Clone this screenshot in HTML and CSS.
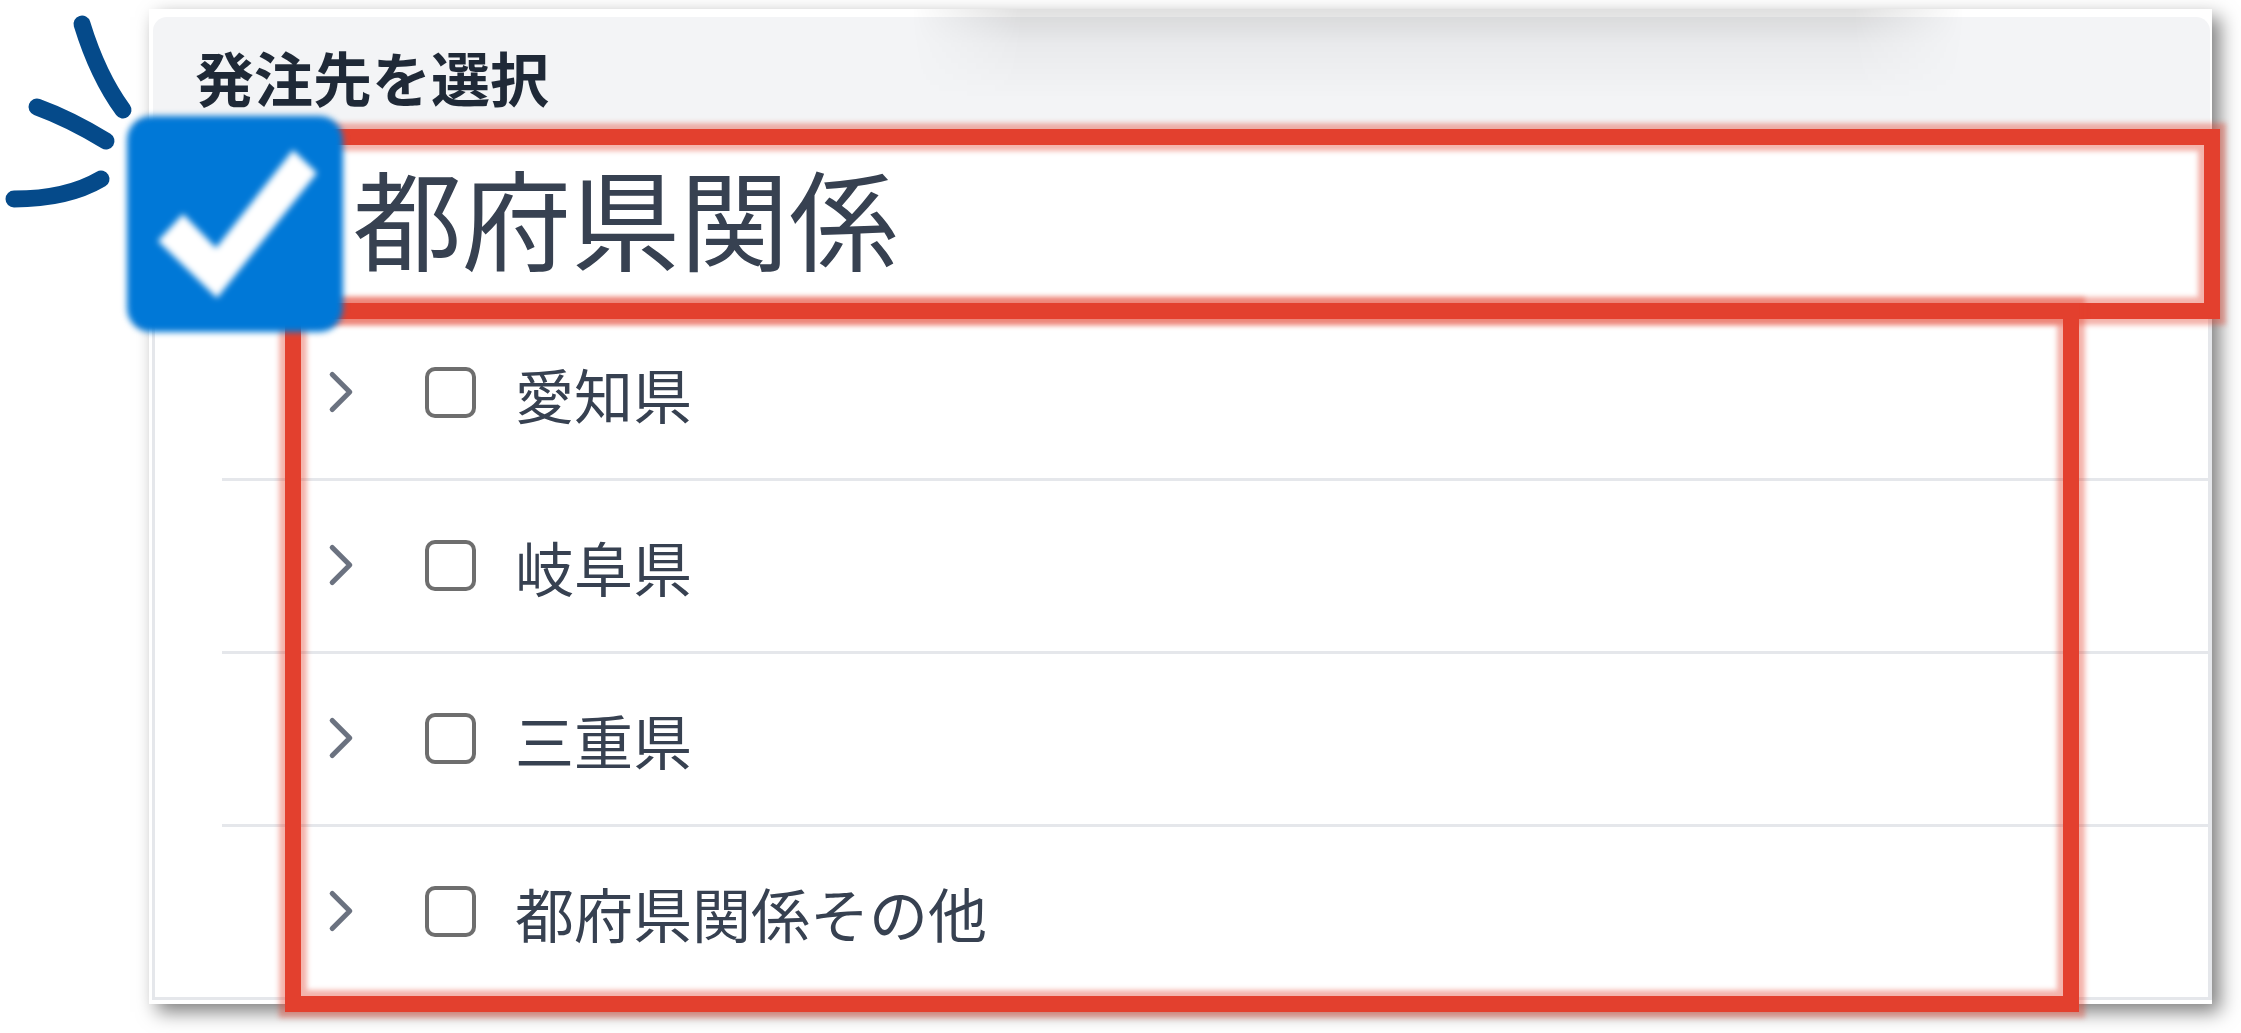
FILE: index.html
```html
<!DOCTYPE html>
<html lang="ja">
<head>
    <meta charset="UTF-8">
    <meta name="viewport" content="width=device-width, initial-scale=1.0">
    <title>発注先を選択</title>
    <link rel="stylesheet" href="styles.css">
</head>
<body>
    <main class="panel">
        <header class="panel-header">
            <h1>発注先を選択</h1>
        </header>

        <!-- Parent category -->
        <div class="group">
            <div class="highlight group-highlight"></div>
            <span class="group-check">
                <input type="checkbox" id="group" checked>
                <svg viewBox="0 0 216 216" aria-hidden="true">
                    <path d="M31 125 L56 98 L89 132 L166 34 L190 57 L90 182 Z" fill="#fff"/>
                </svg>
            </span>
            <label for="group">都府県関係</label>
            <svg class="rays" viewBox="0 0 140 210" aria-hidden="true">
                <path d="M82 24 Q98 76 123 110"/>
                <path d="M37 107 Q70 119 106 141"/>
                <path d="M14 199 Q67 199 101 179"/>
            </svg>
        </div>

        <!-- Prefectures -->
        <div class="tree">
            <div class="highlight tree-highlight"></div>
            <ul>
                <li>
                    <button type="button" aria-label="愛知県を開く"><svg viewBox="0 0 24 24"><path d="M8.25 4.5l7.5 7.5-7.5 7.5"/></svg></button>
                    <input type="checkbox" id="aichi">
                    <label for="aichi">愛知県</label>
                </li>
                <li>
                    <button type="button" aria-label="岐阜県を開く"><svg viewBox="0 0 24 24"><path d="M8.25 4.5l7.5 7.5-7.5 7.5"/></svg></button>
                    <input type="checkbox" id="gifu">
                    <label for="gifu">岐阜県</label>
                </li>
                <li>
                    <button type="button" aria-label="三重県を開く"><svg viewBox="0 0 24 24"><path d="M8.25 4.5l7.5 7.5-7.5 7.5"/></svg></button>
                    <input type="checkbox" id="mie">
                    <label for="mie">三重県</label>
                </li>
                <li>
                    <button type="button" aria-label="都府県関係その他を開く"><svg viewBox="0 0 24 24"><path d="M8.25 4.5l7.5 7.5-7.5 7.5"/></svg></button>
                    <input type="checkbox" id="other">
                    <label for="other">都府県関係その他</label>
                </li>
            </ul>
        </div>
    </main>
</body>
</html>
```
FILE: styles.css
```css
:root {
    --text-color: #374151;
    --heading-color: #1f2937;
    --line-color: #e5e7eb;
    --highlight-color: #e3402e;
    --highlight-glow: rgba(227, 64, 46, 0.4);
    --check-color: #0078d7;
}

* {
    box-sizing: border-box;
}

body {
    margin: 0;
    padding: 9px 29px 29px 149px;
    background: #fff;
    color: var(--text-color);
    font-family: "Noto Sans CJK JP", sans-serif;
    overflow-x: hidden;
}

.panel {
    padding: 8px 0 4px 3px;
    background: #fff;
    box-shadow: 8px 8px 18px rgba(0, 0, 0, 0.5);
    position: relative;
}

.panel-header {
    height: 118px;
    margin: 0 2px 0 1px;
    padding: 24px 42px;
    background: #f3f4f6;
    border-radius: 14px 14px 0 0;
}

/* Shadow cast from the dialog above */
.panel::before {
    content: "";
    position: absolute;
    top: 0;
    left: 37%;
    right: 12%;
    height: 110px;
    background: linear-gradient(rgba(0, 0, 0, 0.12), rgba(0, 0, 0, 0.04) 35px, transparent 90px);
    -webkit-mask-image: linear-gradient(to right, transparent, #000 110px, #000 calc(100% - 110px), transparent);
    mask-image: linear-gradient(to right, transparent, #000 110px, #000 calc(100% - 110px), transparent);
}

h1 {
    margin: 0;
    font-size: 59px;
    line-height: 72px;
    font-weight: 700;
    color: var(--heading-color);
}

.highlight {
    position: absolute;
    z-index: 1;
    border: 16px solid var(--highlight-color);
    box-shadow: 0 0 5px 6px var(--highlight-glow), inset 0 0 5px 6px var(--highlight-glow);
    pointer-events: none;
}

.group {
    position: relative;
    display: flex;
    align-items: center;
    height: 173px;
    background: #fff;
}

.group-highlight {
    inset: -6px -8px -11px;
}

.group-check {
    position: relative;
    z-index: 2;
    width: 216px;
    height: 216px;
    margin: 5px 0 0 -25px;
    filter: blur(3px);
}

.group-check input {
    appearance: none;
    display: block;
    width: 100%;
    height: 100%;
    margin: 0;
    border-radius: 24px;
    background: var(--check-color);
}

.group-check svg {
    position: absolute;
    inset: 0;
    pointer-events: none;
}

.group label {
    padding: 0 0 12px 10px;
    font-size: 109px;
    line-height: 120px;
}

/* Hand-drawn accent lines beside the big tick box */
.rays {
    position: absolute;
    left: -152px;
    top: -135px;
    width: 140px;
    height: 210px;
    fill: none;
    stroke: #054a8a;
    stroke-width: 17;
    stroke-linecap: round;
}

.tree {
    position: relative;
    border: solid var(--line-color);
    border-width: 0 4px 0 3px;
}

.tree-highlight {
    inset: -5px 129px -12px 130px;
}

ul {
    margin: 0;
    padding: 0;
    list-style: none;
}

li {
    display: flex;
    align-items: center;
    height: 173px;
    margin-left: 67px;
    padding: 0 0 2px 91px;
    border-bottom: 3px solid var(--line-color);
}

li:last-child {
    margin-left: 0;
    padding-left: 158px;
}

li button {
    width: 56px;
    height: 56px;
    padding: 0;
    border: none;
    background: none;
    cursor: pointer;
}

li svg {
    display: block;
    fill: none;
    stroke: #6b7280;
    stroke-width: 2.2;
    stroke-linecap: round;
    stroke-linejoin: round;
}

li input {
    appearance: none;
    width: 51px;
    height: 51px;
    margin: 0 39px 0 56px;
    border: 4px solid #6e6e6e;
    border-radius: 10px;
    background: #fff;
}

li label {
    padding-top: 4px;
    font-size: 59px;
    line-height: 72px;
}
```
